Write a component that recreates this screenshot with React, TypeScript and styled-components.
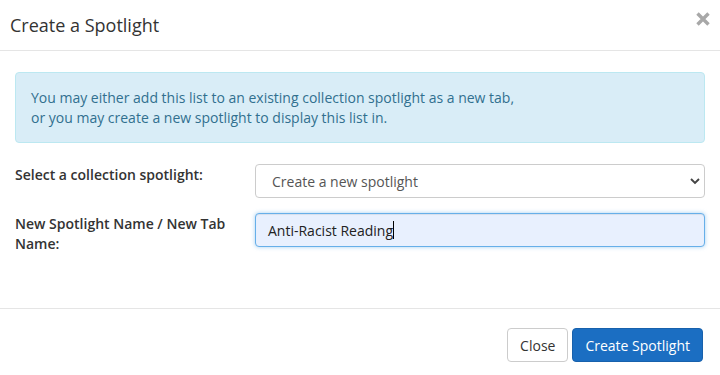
import React from "react";
import styled, { createGlobalStyle } from "styled-components";

const Global = createGlobalStyle`
  html, body { margin: 0; padding: 0; background: #fff; }
  body { font-family: "Open Sans", "Liberation Sans", sans-serif; font-size: 14px; color: #333; }
  * { box-sizing: border-box; }
`;

const Modal = styled.div`
  width: 720px;
  height: 375px;
  display: flex;
  flex-direction: column;
  background: #fff;
`;

const Header = styled.div`
  height: 51px;
  padding: 0 10px 0 10px;
  display: flex;
  align-items: center;
  justify-content: space-between;
  border-bottom: 1px solid #e5e5e5;
`;

const Title = styled.h4`
  margin: 0;
  font-size: 18px;
  font-weight: 400;
  line-height: 25px;
  color: #333;
  padding-top: 1px;
`;

const CloseX = styled.button`
  border: 0;
  background: none;
  padding: 0;
  width: 14px;
  height: 14px;
  margin-top: -13px;
  display: flex;
  align-items: center;
  justify-content: center;
  cursor: pointer;
`;

const Body = styled.div`
  padding: 21px 15px 15px;
  flex: 1;
  display: flex;
  flex-direction: column;
`;

const Alert = styled.div`
  background: #d9edf7;
  border: 1px solid #bce8f1;
  border-radius: 4px;
  color: #31708f;
  padding: 15px 15px 14px;
  line-height: 20px;
  font-size: 14px;
  margin-bottom: 21px;
`;

const Row = styled.div`
  display: grid;
  grid-template-columns: 225px 450px;
  column-gap: 15px;
  margin-bottom: 15px;
`;

const Label = styled.label`
  font-weight: 600;
  font-size: 14px;
  line-height: 20px;
  color: #333;
  padding-top: 1px;
  padding-right: 10px;
`;

const Select = styled.div`
  height: 34px;
  border: 1px solid #ccc;
  border-radius: 4px;
  background: #fff;
  display: flex;
  align-items: center;
  justify-content: space-between;
  padding: 0 3px 0 16px;
  font-size: 14px;
  color: #555;
`;

const Input = styled.div`
  height: 34px;
  border: 1px solid #66afe9;
  border-radius: 4px;
  background: #e8f0fe;
  box-shadow: inset 0 1px 1px rgba(0,0,0,.075), 0 0 4px rgba(102,175,233,.6);
  display: flex;
  align-items: center;
  padding: 0 12px;
  font-size: 14px;
  color: #222;
`;

const Caret = styled.span`
  display: inline-block;
  width: 1px;
  height: 18px;
  background: #000;
`;

const Footer = styled.div`
  border-top: 1px solid #e5e5e5;
  height: 67px;
  display: flex;
  justify-content: flex-end;
  align-items: flex-start;
  padding: 19px 17px 0 0;
  gap: 4px;
`;

const Button = styled.button<{ $primary?: boolean }>`
  height: 34px;
  padding: 0 12px;
  border-radius: 4px;
  font-family: "Open Sans", "Liberation Sans", sans-serif;
  font-size: 14px;
  border: 1px solid ${(p) => (p.$primary ? "#1861ac" : "#ccc")};
  background: ${(p) => (p.$primary ? "#1b6ec2" : "#fff")};
  color: ${(p) => (p.$primary ? "#fff" : "#333")};
  cursor: pointer;
`;

export default function App() {
  return (
    <>
      <Global />
      <Modal>
        <Header>
          <Title>Create a Spotlight</Title>
          <CloseX aria-label="Close">
            <svg width="14" height="14" viewBox="0 0 14 14">
              <path d="M1.5 1.5 L12.5 12.5 M12.5 1.5 L1.5 12.5" stroke="#a8a8a8" strokeWidth="3.4" strokeLinecap="butt" />
            </svg>
          </CloseX>
        </Header>
        <Body>
          <Alert>
            You may either add this list to an existing collection spotlight as a new tab,
            <br />
            or you may create a new spotlight to display this list in.
          </Alert>
          <Row>
            <Label>Select a collection spotlight:</Label>
            <Select>
              <span>Create a new spotlight</span>
              <svg width="12" height="10" viewBox="0 0 12 10">
                <path d="M2 3 L6 7 L10 3" fill="none" stroke="#444" strokeWidth="1.9" />
              </svg>
            </Select>
          </Row>
          <Row>
            <Label>New Spotlight Name / New Tab Name:</Label>
            <Input>
              Anti-Racist Reading<Caret />
            </Input>
          </Row>
        </Body>
        <Footer>
          <Button>Close</Button>
          <Button $primary>Create Spotlight</Button>
        </Footer>
      </Modal>
    </>
  );
}
